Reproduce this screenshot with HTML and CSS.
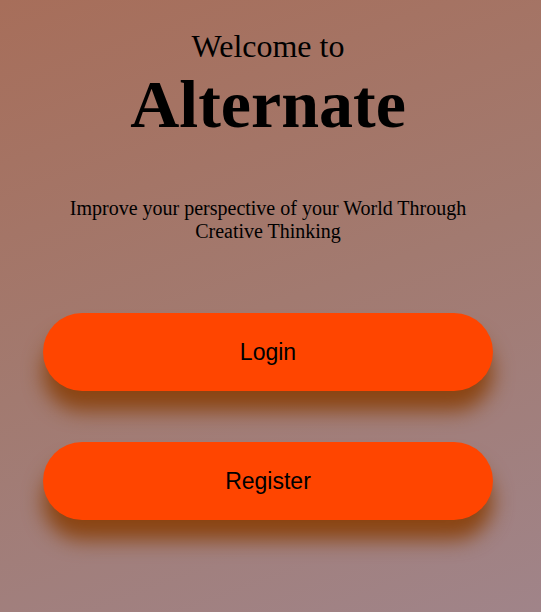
FILE: index.html
```html
<!DOCTYPE html>
<html>
<head>
<meta charset="utf-8">
<link rel="stylesheet" href="styles.css">
</head>
<body>
<main class="page">
  <header class="hero">
    <div class="welcome">Welcome to</div>
    <h1 class="brand">Alternate</h1>
  </header>
  <p class="tagline">Improve your perspective of your World Through Creative Thinking</p>
  <div class="actions">
    <button class="btn">Login</button>
    <button class="btn">Register</button>
  </div>
</main>
</body>
</html>
```

FILE: styles.css
```css
html, body {
  margin: 0;
  height: 100%;
}
body {
  background: linear-gradient(160deg, #a76e5a 0%, #a27a70 50%, #a08489 100%);
  font-family: "Liberation Serif", "Times New Roman", serif;
  color: #000;
  overflow: hidden;
}
.page {
  width: 536px;
  display: flex;
  flex-direction: column;
  align-items: center;
}
.hero {
  display: flex;
  flex-direction: column;
  align-items: center;
  margin-top: 28px;
}
.welcome {
  font-size: 32px;
  line-height: 37px;
}
.brand {
  margin: 0;
  font-size: 68px;
  font-weight: bold;
  line-height: 78px;
}
.tagline {
  margin: 54px 0 0;
  width: 420px;
  text-align: center;
  font-size: 20px;
  line-height: 23px;
}
.actions {
  margin-top: 70px;
  display: flex;
  flex-direction: column;
  gap: 51px;
}
.btn {
  width: 450px;
  height: 78px;
  border: none;
  border-radius: 39px;
  background: #ff4500;
  color: #000;
  font-family: "Liberation Sans", Arial, sans-serif;
  font-size: 23px;
  box-shadow: 0 20px 20px #8b4513;
  padding: 0;
}
```
